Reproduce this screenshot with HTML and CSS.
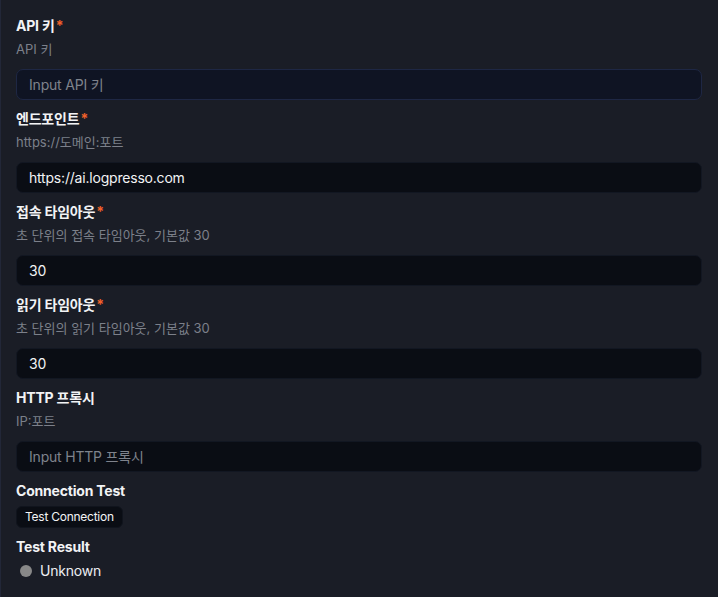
FILE: index.html
```html
<!DOCTYPE html>
<html lang="ko">
<head>
<meta charset="utf-8">
<link rel="stylesheet" href="styles.css">
</head>
<body>
<div class="panel">
  <div class="field">
    <div class="label">API 키<span class="req">*</span></div>
    <div class="desc">API 키</div>
    <input class="input focus" type="text" placeholder="Input API 키">
  </div>
  <div class="field">
    <div class="label">엔드포인트<span class="req">*</span></div>
    <div class="desc">https://도메인:포트</div>
    <input class="input" type="text" value="https://ai.logpresso.com">
  </div>
  <div class="field">
    <div class="label">접속 타임아웃<span class="req">*</span></div>
    <div class="desc">초 단위의 접속 타임아웃, 기본값 30</div>
    <input class="input" type="text" value="30">
  </div>
  <div class="field">
    <div class="label">읽기 타임아웃<span class="req">*</span></div>
    <div class="desc">초 단위의 읽기 타임아웃, 기본값 30</div>
    <input class="input" type="text" value="30">
  </div>
  <div class="field">
    <div class="label">HTTP 프록시</div>
    <div class="desc">IP:포트</div>
    <input class="input" type="text" placeholder="Input HTTP 프록시">
  </div>
  <div class="section">
    <div class="label">Connection Test</div>
    <button class="btn" type="button">Test Connection</button>
  </div>
  <div class="section">
    <div class="label">Test Result</div>
    <div class="status"><span class="dot"></span><span>Unknown</span></div>
  </div>
</div>
</body>
</html>
```
FILE: styles.css
```css
html, body {
  margin: 0;
  padding: 0;
  background: #1a1d26;
}
body {
  font-family: Inter, "Noto Sans CJK KR", sans-serif;
  color: #eceef2;
  width: 718px;
  height: 597px;
  overflow: hidden;
  letter-spacing: -0.2px;
}
.panel {
  box-sizing: border-box;
  height: 597px;
  border-left: 1px solid #222738;
  padding: 16px 16px 0 15px;
  display: flex;
  flex-direction: column;
}
.field {
  display: flex;
  flex-direction: column;
  margin-bottom: 9px;
}
.label {
  font-size: 14px;
  line-height: 20px;
  font-weight: 700;
  color: #f2f3f5;
}
.req {
  color: #f0602a;
  margin-left: 1px;
}
.desc {
  font-size: 13px;
  line-height: 20px;
  letter-spacing: 0;
  color: #7c808a;
  margin-top: 3px;
  margin-bottom: 10px;
}
.input {
  box-sizing: border-box;
  height: 31px;
  width: 100%;
  margin: 0;
  border-radius: 7px;
  border: 1px solid #121722;
  background: #0a0d14;
  color: #f2f3f5;
  font-family: Inter, "Noto Sans CJK KR", sans-serif;
  letter-spacing: -0.2px;
  font-size: 14px;
  padding: 0 12px;
  outline: none;
}
.input::placeholder {
  color: #7f838c;
}
.input.focus {
  background: #0f1423;
  border-color: #1e2744;
}
.section {
  display: flex;
  flex-direction: column;
  align-items: flex-start;
  margin-bottom: 9px;
}
.btn {
  margin-top: 5px;
  height: 22px;
  padding: 0 8px;
  border: 1px solid #10141d;
  border-radius: 6px;
  background: #0a0d14;
  color: #f2f3f5;
  font-family: Inter, "Noto Sans CJK KR", sans-serif;
  letter-spacing: -0.25px;
  font-size: 12px;
  line-height: 20px;
}
.status {
  display: flex;
  align-items: center;
  gap: 8px;
  margin-top: 4px;
  padding-left: 4px;
  font-size: 14px;
  line-height: 20px;
  color: #eceef2;
}
.dot {
  width: 12px;
  height: 12px;
  border-radius: 50%;
  background: #888888;
}
```
